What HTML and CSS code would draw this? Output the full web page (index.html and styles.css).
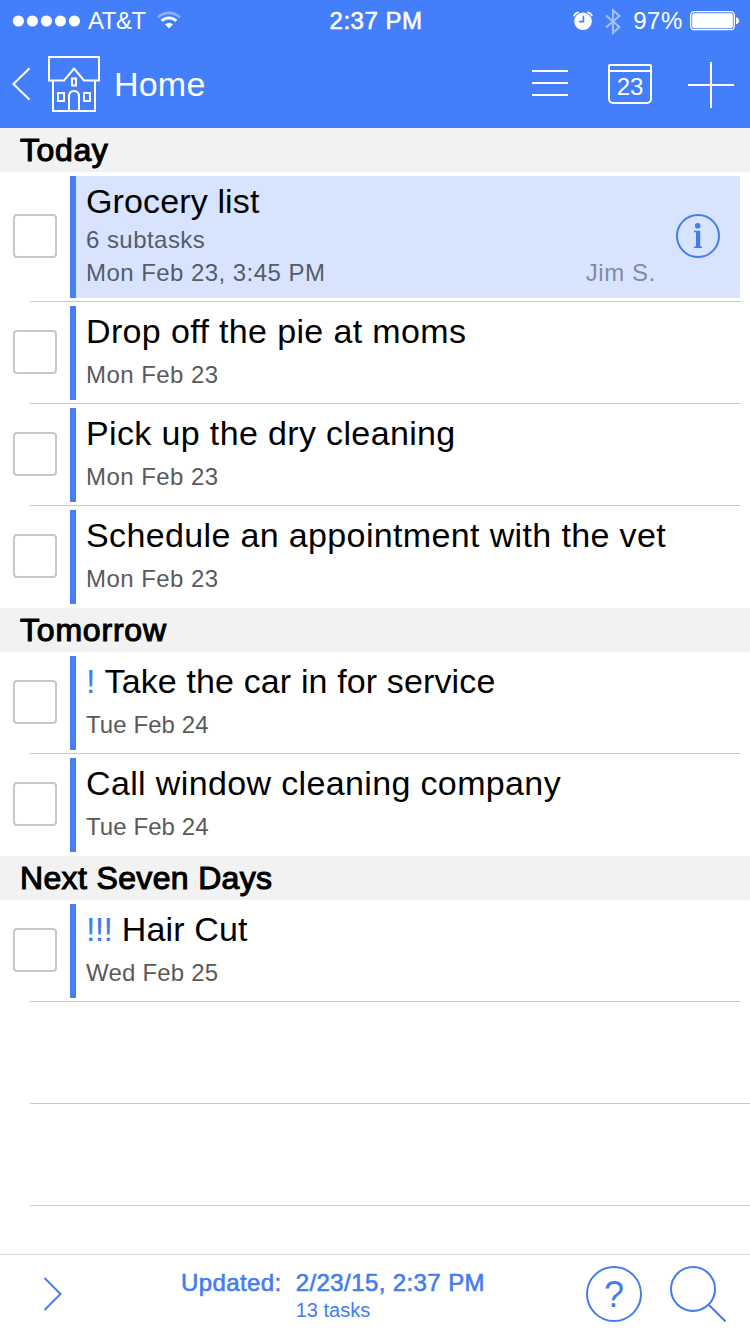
FILE: index.html
```
<!DOCTYPE html>
<html lang="en">
<head>
<meta charset="utf-8">
<title>Home</title>
<link rel="stylesheet" href="styles.css">
</head>
<body>
<div class="app">
  <header class="top">
    <div class="status">
      <div class="status-left">
        <svg class="dots" width="68" height="12" viewBox="0 0 68 12" fill="#fff"><circle cx="6.4" cy="6" r="5.6"/><circle cx="20.4" cy="6" r="5.6"/><circle cx="34.4" cy="6" r="5.6"/><circle cx="48.4" cy="6" r="5.6"/><circle cx="62.4" cy="6" r="5.6"/></svg>
        <span class="carrier">AT&amp;T</span>
        <svg class="wifi" width="26" height="20" viewBox="0 0 26 20" fill="none" stroke="#fff" stroke-width="2.8"><path d="M2 6.2C8.4.4 17.6.4 24 6.2" opacity=".4"/><path d="M5.6 9.8C10 5.8 16 5.8 20.4 9.8"/><path d="M9 13.2Q13 10.2 17 13.2L13 17.6Z" fill="#fff" stroke="none"/></svg>
      </div>
      <span class="clock">2:37 PM</span>
      <div class="status-right">
        <svg width="20" height="20" viewBox="0 0 20 20"><circle cx="10" cy="10.2" r="8.8" fill="#fff"/><path d="M1.2 4.6Q2 2 5 1.3M15 1.3Q18 2 18.8 4.6" fill="none" stroke="#fff" stroke-width="1.8" stroke-linecap="round"/><path d="M10.4 4.8V10.6H6" fill="none" stroke="#437efb" stroke-width="1.6"/></svg>
        <svg class="bluetooth" width="16" height="27" viewBox="0 0 16 27" fill="none" stroke="#a5c1fd" stroke-width="2"><path d="M1 7.5L14.4 19 8 24.8V2.2L14.4 8 1 19.5"/></svg>
        <span class="percent">97%</span>
        <svg class="battery" width="50" height="20" viewBox="0 0 50 20"><rect x=".7" y=".7" width="43.6" height="18" rx="3.5" fill="none" stroke="#fff" stroke-width="1.3"/><rect x="2.2" y="2.2" width="40.6" height="15" rx="1.8" fill="#fff"/><path d="M46 6.2Q49 7 49 9.7T46 13.2Z" fill="#fff"/></svg>
      </div>
    </div>
    <nav class="nav">
      <svg class="back" width="20" height="34" viewBox="0 0 20 34" fill="none" stroke="#fff" stroke-width="2"><path d="M18.6 1.2L2.4 17 18.6 32.8"/></svg>
      <svg class="house" width="52" height="56" viewBox="0 0 52 56" fill="none" stroke="#fff" stroke-width="2"><path d="M5 24.5H1V1H51V24.5H36L26 12.5 16 24.5H5V55H47V24.5"/><rect x="24" y="22.5" width="4" height="7"/><rect x="10" y="37" width="6" height="8"/><rect x="36" y="37" width="6" height="8"/><path d="M21 55V40.5Q21 35 26 35T31 40.5V55"/></svg>
      <h1 class="title">Home</h1>
      <svg class="menu" width="36" height="28" viewBox="0 0 36 28" stroke="#fff" stroke-width="2"><path d="M0 2H36M0 14H36M0 26H36"/></svg>
      <div class="calendar">23</div>
      <svg class="plus" width="46" height="46" viewBox="0 0 46 46" stroke="#fff" stroke-width="2"><path d="M0 23H46M23 0V46"/></svg>
    </nav>
  </header>

  <main class="list">
    <h2 class="section section-today">Today</h2>
    <article class="row row-tall">
      <span class="check"></span>
      <div class="task selected">
        <div class="name name-grocery">Grocery list</div>
        <div class="meta subtasks">6 subtasks</div>
        <div class="meta meta-split"><span>Mon Feb 23, 3:45 PM</span><span class="owner">Jim S.</span></div>
      </div>
      <svg class="info" width="44" height="44" viewBox="0 0 44 44" fill="none" stroke="#447cf0" stroke-width="2"><circle cx="22" cy="22" r="21"/><circle cx="21.7" cy="11.7" r="2.8" fill="#447cf0" stroke="none"/><path d="M18 16.8H24.2V32.6H26V34H18V32.6H20V18.2H18Z" fill="#447cf0" stroke="none"/></svg>
    </article>
    <article class="row"><span class="check"></span><div class="task"><div class="name">Drop off the pie at moms</div><div class="meta">Mon Feb 23</div></div></article>
    <article class="row"><span class="check"></span><div class="task"><div class="name">Pick up the dry cleaning</div><div class="meta">Mon Feb 23</div></div></article>
    <article class="row row-last"><span class="check"></span><div class="task"><div class="name">Schedule an appointment with the vet</div><div class="meta">Mon Feb 23</div></div></article>
    <h2 class="section section-tomorrow">Tomorrow</h2>
    <article class="row"><span class="check"></span><div class="task"><div class="name name-tight"><span class="priority">!</span> Take the car in for service</div><div class="meta meta-tue">Tue Feb 24</div></div></article>
    <article class="row row-last"><span class="check"></span><div class="task"><div class="name">Call window cleaning company</div><div class="meta meta-tue">Tue Feb 24</div></div></article>
    <h2 class="section">Next Seven Days</h2>
    <article class="row"><span class="check"></span><div class="task"><div class="name name-tight"><span class="priority priority-high">!!!</span> Hair Cut</div><div class="meta meta-wed">Wed Feb 25</div></div></article>
    <div class="blank"></div>
    <div class="blank"></div>
  </main>

  <footer class="bottom">
    <svg class="next" width="20" height="34" viewBox="0 0 20 34" fill="none" stroke="#447cf0" stroke-width="2"><path d="M1.5 1L17.5 17 1.5 33"/></svg>
    <div class="sync"><div class="updated">Updated:&nbsp; 2/23/15, 2:37 PM</div><div class="count">13 tasks</div></div>
    <div class="help">?</div>
    <svg class="search" width="56" height="56" viewBox="0 0 56 56" fill="none" stroke="#447cf0" stroke-width="2"><circle cx="23" cy="23" r="22"/><path d="M39 39L55.5 55.5"/></svg>
  </footer>
</div>
</body>
</html>
```
FILE: styles.css
```
* { box-sizing: border-box; }
body { margin: 0; background: #fff; font-family: "Liberation Sans", Arial, sans-serif; color: #000; }
svg { display: block; flex: none; }
h1, h2 { margin: 0; font-weight: 400; }
.app { width: 750px; height: 1334px; display: flex; flex-direction: column; overflow: hidden; white-space: nowrap; }

.top { height: 128px; background: #437efb; color: #fff; }
.status { height: 40px; display: grid; grid-template-columns: 1fr auto 1fr; align-items: center; padding: 1px 10px 0 12px; font-size: 24px; line-height: 40px; }
.status-left, .status-right { display: flex; align-items: center; }
.status-right { justify-content: flex-end; }
.carrier { margin-left: 8px; letter-spacing: -.5px; }
.wifi { margin-left: 10px; }
.clock { letter-spacing: .5px; -webkit-text-stroke: .6px #fff; }
.bluetooth { margin-left: 12px; }
.percent { margin-left: 12px; letter-spacing: .6px; }
.battery { margin-left: 7px; }

.nav { height: 88px; display: flex; align-items: center; padding: 0 16px 8px 11px; }
.back { margin-top: 8px; }
.house { margin-left: 17px; margin-top: 8px; }
.title { margin-left: 14px; margin-top: 8px; font-size: 34px; line-height: 40px; letter-spacing: .2px; }
.menu { margin-left: auto; margin-top: 6px; }
.calendar { margin: 8px 0 0 40px; width: 44px; height: 40px; border: 2px solid #fff; border-radius: 2px 2px 5px 5px; background: linear-gradient(#fff, #fff) 0 4px / 100% 2px no-repeat; font-size: 24px; line-height: 28px; padding-top: 7px; text-align: center; }
.plus { margin-left: 36px; margin-top: 10px; }

.list { flex: 1; background: #fff; }
.section { height: 44px; padding-left: 20px; background: #f2f2f2; font-size: 32px; line-height: 44px; letter-spacing: .35px; -webkit-text-stroke: 1.1px #000; }
.section-today { letter-spacing: .6px; }
.section-tomorrow { letter-spacing: .8px; }
.row { height: 102px; display: flex; padding: 4px 10px 4px 13px; background: linear-gradient(#c8c7cc, #c8c7cc) 30px 100% / 710px 1px no-repeat; }
.row-last { background: none; }
.row-tall { height: 130px; position: relative; }
.check { flex: none; width: 44px; height: 44px; margin: 24px 13px 0 0; border: 2px solid #c8c8c8; border-radius: 4px; }
.row-tall .check { margin-top: 38px; }
.task { flex: 1; border-left: 6px solid #477ef0; padding: 5px 0 0 10px; }
.selected { background: #d8e4fe; }
.name { height: 40px; margin-bottom: 8px; font-size: 34px; line-height: 40px; letter-spacing: .36px; }
.name-grocery { margin-bottom: 3px; letter-spacing: .13px; }
.name-tight { letter-spacing: .13px; }
.meta { height: 33px; font-size: 24px; line-height: 32px; letter-spacing: .45px; color: #5a5a5a; }
.meta-tue { letter-spacing: .07px; }
.meta-wed { letter-spacing: .2px; }
.selected .meta { color: #565c68; }
.meta-split { display: flex; justify-content: space-between; padding-right: 84px; }
.meta-split .owner { color: #848b99; letter-spacing: .6px; }
.priority { color: #447cf0; }
.priority-high { letter-spacing: -.7px; }
.info { position: absolute; left: 676px; top: 42px; }
.blank { height: 102px; margin-left: 30px; border-bottom: 1px solid #c8c7cc; }

.bottom { height: 80px; border-top: 1px solid #d8d8d8; display: flex; padding: 0 24px 0 43px; color: #447cf0; }
.next { margin-top: 22px; }
.sync { width: 304px; margin-left: 118px; text-align: center; }
.updated { margin-top: 12px; font-size: 24px; line-height: 32px; letter-spacing: .4px; -webkit-text-stroke: .6px #447cf0; }
.count { font-size: 20px; line-height: 22px; letter-spacing: 0; }
.help { width: 56px; height: 56px; margin: 11px 0 0 auto; border: 2px solid #447cf0; border-radius: 50%; text-align: center; font-size: 36px; line-height: 54px; }
.search { margin: 11px 0 0 28px; }
```
